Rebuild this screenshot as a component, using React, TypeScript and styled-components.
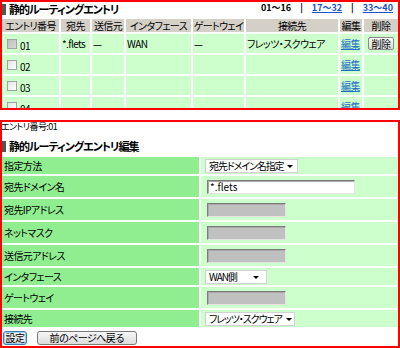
import styled, { createGlobalStyle } from "styled-components";

const GlobalStyle = createGlobalStyle`
  html, body {
    margin: 0;
    padding: 0;
    background: #fff;
  }
  body {
    font-family: "Noto Sans CJK JP", "Noto Sans", sans-serif;
    font-size: 10px;
    font-feature-settings: "palt";
    letter-spacing: -0.6px;
    color: #000;
  }
`;

const Frame = styled.div<{ $height: number; $gap?: number }>`
  box-sizing: border-box;
  height: ${(p) => p.$height}px;
  margin-top: ${(p) => p.$gap || 0}px;
  border: 2px solid #ff0000;
  overflow: hidden;
`;

const TopBar = styled.div`
  display: flex;
  justify-content: space-between;
  align-items: flex-start;
  height: 15px;
  padding-top: 1px;
  box-sizing: border-box;
`;

const Title = styled.h2`
  display: flex;
  align-items: center;
  margin: 0;
  font-size: 11px;
  font-weight: bold;
  line-height: 13px;
  letter-spacing: -1px;
  &::before {
    content: "";
    display: block;
    width: 4px;
    height: 11px;
    margin-right: 3px;
    background: #555;
  }
`;

const Pager = styled.div`
  display: flex;
  gap: 9px;
  padding-right: 5px;
  font-size: 9px;
  font-weight: bold;
  line-height: 10px;
  letter-spacing: 0;
  a {
    color: #1a4fd0;
    text-decoration: underline;
  }
`;

const Table = styled.table`
  border-collapse: separate;
  border-spacing: 2px;
  margin: 0 -2px;
  width: calc(100% + 4px);
  table-layout: fixed;
`;

const Th = styled.th<{ $w: number }>`
  width: ${(p) => p.$w}px;
  height: 13px;
  padding: 0;
  background: #d4d0c8;
  font-weight: normal;
  font-size: 10px;
  line-height: 13px;
  text-align: center;
  white-space: nowrap;
  overflow: hidden;
`;

const Td = styled.td`
  height: 19px;
  padding: 0 1px;
  background: #ccffcc;
  font-size: 10px;
  white-space: nowrap;
  overflow: hidden;
  vertical-align: middle;
`;

const EntryCell = styled.div`
  display: flex;
  align-items: center;
  gap: 3px;
  padding-left: 4px;
  span {
    padding-top: 3px;
  }
`;

const Check = styled.span<{ $shade?: boolean }>`
  display: block;
  box-sizing: border-box;
  width: 10px;
  height: 10px;
  border: 1px solid #a2a2a2;
  background: ${(p) =>
    p.$shade
      ? "linear-gradient(135deg, #bdbdbd, #d9d9d9)"
      : "linear-gradient(135deg, #e4e4e4, #ffffff)"};
`;

const EditLink = styled.a`
  color: #1f6fc5;
  text-decoration: underline;
`;

const SmallButton = styled.button`
  display: block;
  margin: 0 auto;
  width: 26px;
  height: 13px;
  padding: 0;
  border: 1px solid #8a8a8a;
  border-radius: 2px;
  background: linear-gradient(#fdfdfd, #d8d8d8);
  font-family: inherit;
  font-size: 10px;
  letter-spacing: -0.6px;
  line-height: 11px;
`;

const EntryNo = styled.div`
  font-size: 9px;
  line-height: 10px;
  margin-left: -1px;
`;

const EditTitle = styled(Title)`
  margin: 8px 0 2px;
`;

const FormRow = styled.tr<{ $tall?: boolean }>`
  td {
    height: ${(p) => (p.$tall ? 21 : 17)}px;
  }
`;

const Label = styled.td`
  width: 193px;
  padding: 0 2px;
  background: #90ee90;
  font-size: 10px;
  vertical-align: middle;
  white-space: nowrap;
`;

const Value = styled.td`
  padding: 0 4px;
  background: #ccffcc;
  vertical-align: middle;
`;

const Select = styled.div<{ $w: number }>`
  box-sizing: border-box;
  display: flex;
  align-items: center;
  justify-content: space-between;
  gap: 4px;
  width: ${(p) => p.$w}px;
  height: 14px;
  padding: 0 7px 0 3px;
  border: 1px solid #d2d2d2;
  background: #fff;
  font-size: 10px;
  line-height: 12px;
  letter-spacing: -1.1px;
  white-space: nowrap;
  overflow: hidden;
`;

const Caret = styled.span`
  flex: none;
  width: 0;
  height: 0;
  border-left: 3px solid transparent;
  border-right: 3px solid transparent;
  border-top: 3px solid #000;
  margin-top: 1px;
`;

const TextInput = styled.input<{ $w: number }>`
  box-sizing: border-box;
  display: block;
  width: ${(p) => p.$w}px;
  height: 14px;
  margin-left: 2px;
  padding: 0 2px;
  border: 1px solid;
  border-color: #7b7b7b #e4e4e4 #e4e4e4 #7b7b7b;
  box-shadow: inset 1px 1px 0 #a8a8a8;
  background: ${(p) => (p.disabled ? "#c0c0c0" : "#fff")};
  font-family: inherit;
  font-size: 10px;
  outline: none;
`;

const Buttons = styled.div`
  display: flex;
  gap: 10px;
  margin: 2px 0 0 1px;
`;

const Button = styled.button<{ $w: number; $primary?: boolean }>`
  box-sizing: border-box;
  width: ${(p) => p.$w}px;
  height: 14px;
  padding: 0;
  border: 1px solid ${(p) => (p.$primary ? "#3d7bad" : "#7a7a7a")};
  border-radius: 3px;
  box-shadow: ${(p) => (p.$primary ? "inset 0 0 0 1px #9fd0f0" : "none")};
  background: linear-gradient(#f6f6f6, #dcdcdc);
  font-family: inherit;
  font-size: 10px;
  letter-spacing: -0.6px;
  line-height: 12px;
`;

const columns = [
  { name: "エントリ番号", w: 57 },
  { name: "宛先", w: 29 },
  { name: "送信元", w: 32 },
  { name: "インタフェース", w: 65 },
  { name: "ゲートウェイ", w: 51 },
  { name: "接続先", w: 92 },
  { name: "編集", w: 22 },
  { name: "削除", w: 34 },
];

const entries = [
  { no: "01", dest: "*.flets", src: "—", ifc: "WAN", gw: "—", conn: "フレッツ・スクウェア", used: true },
  { no: "02" },
  { no: "03" },
  { no: "04" },
] as { no: string; dest?: string; src?: string; ifc?: string; gw?: string; conn?: string; used?: boolean }[];

export default function App() {
  return (
    <>
      <GlobalStyle />
      <Frame $height={110}>
        <TopBar>
          <Title>静的ルーティングエントリ</Title>
          <Pager>
            <span>01～16</span>
            <span>|</span>
            <a href="#">17～32</a>
            <span>|</span>
            <a href="#">33～40</a>
          </Pager>
        </TopBar>
        <Table>
          <thead>
            <tr>
              {columns.map((c) => (
                <Th key={c.name} $w={c.w}>
                  {c.name}
                </Th>
              ))}
            </tr>
          </thead>
          <tbody>
            {entries.map((e) => (
              <tr key={e.no}>
                <Td>
                  <EntryCell>
                    <Check $shade={e.used} />
                    <span>{e.no}</span>
                  </EntryCell>
                </Td>
                <Td>{e.dest}</Td>
                <Td>{e.src}</Td>
                <Td>{e.ifc}</Td>
                <Td>{e.gw}</Td>
                <Td>{e.conn}</Td>
                <Td>
                  <EditLink href="#">編集</EditLink>
                </Td>
                <Td>{e.used && <SmallButton>削除</SmallButton>}</Td>
              </tr>
            ))}
          </tbody>
        </Table>
      </Frame>

      <Frame $height={228} $gap={10}>
        <EntryNo>エントリ番号:01</EntryNo>
        <EditTitle>静的ルーティングエントリ編集</EditTitle>
        <Table>
          <tbody>
            <FormRow>
              <Label>指定方法</Label>
              <Value>
                <Select $w={93}>
                  <span>宛先ドメイン名指定</span>
                  <Caret />
                </Select>
              </Value>
            </FormRow>
            <FormRow $tall>
              <Label>宛先ドメイン名</Label>
              <Value>
                <TextInput $w={148} defaultValue="*.flets" />
              </Value>
            </FormRow>
            <FormRow $tall>
              <Label>宛先IPアドレス</Label>
              <Value>
                <TextInput $w={79} disabled />
              </Value>
            </FormRow>
            <FormRow $tall>
              <Label>ネットマスク</Label>
              <Value>
                <TextInput $w={79} disabled />
              </Value>
            </FormRow>
            <FormRow $tall>
              <Label>送信元アドレス</Label>
              <Value>
                <TextInput $w={79} disabled />
              </Value>
            </FormRow>
            <FormRow>
              <Label>インタフェース</Label>
              <Value>
                <Select $w={62}>
                  <span>WAN側</span>
                  <Caret />
                </Select>
              </Value>
            </FormRow>
            <FormRow $tall>
              <Label>ゲートウェイ</Label>
              <Value>
                <TextInput $w={79} disabled />
              </Value>
            </FormRow>
            <FormRow>
              <Label>接続先</Label>
              <Value>
                <Select $w={90}>
                  <span>フレッツ・スクウェア</span>
                  <Caret />
                </Select>
              </Value>
            </FormRow>
          </tbody>
        </Table>
        <Buttons>
          <Button $w={24} $primary>
            設定
          </Button>
          <Button $w={100}>前のページへ戻る</Button>
        </Buttons>
      </Frame>
    </>
  );
}
